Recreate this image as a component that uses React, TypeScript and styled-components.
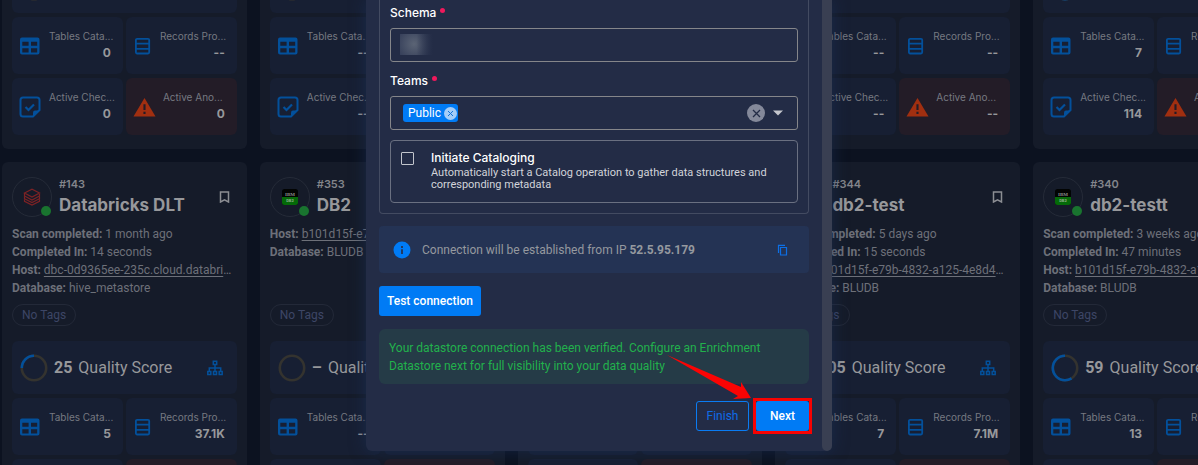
import React from "react";
import styled, { createGlobalStyle, css } from "styled-components";

const Global = createGlobalStyle`
  * { box-sizing: border-box; }
  body { margin: 0; background: #0c1220; font-family: Roboto, "Liberation Sans", sans-serif; color: #fff; }
  p, h2 { margin: 0; }
  button { font-family: inherit; padding: 0; cursor: pointer; }
`;

const Shell = styled.div`
  position: relative;
  height: 100vh;
  overflow: hidden;
`;

/* Datastore list, scrolled so that the first row is partly out of view */
const CardGrid = styled.main`
  display: grid;
  grid-template-columns: repeat(5, minmax(0, 1fr));
  gap: 13px;
  margin: -54px -80px 0 2px;
`;

const Card = styled.article`
  background: #151b29;
  border-radius: 6px;
  padding: 14px 10px;
`;

const CardHead = styled.header`
  display: flex;
  align-items: center;
  height: 42px;
`;

const Avatar = styled.div`
  position: relative;
  display: grid;
  place-items: center;
  flex: none;
  width: 40px;
  height: 40px;
  border: 1px solid #252b38;
  border-radius: 50%;
`;

const StatusDot = styled.span`
  position: absolute;
  right: 0;
  bottom: 0;
  width: 10px;
  height: 10px;
  border-radius: 50%;
  background: #19742f;
`;

const HeadText = styled.div`
  flex: 1;
  margin-left: 7px;
  font-family: Inter, "Liberation Sans", sans-serif;
  white-space: nowrap;
`;

const CardId = styled.p`
  font-size: 11px;
  line-height: 16px;
  font-weight: 600;
  color: #83858b;
`;

const CardTitle = styled.h2`
  font-size: 17px;
  line-height: 26px;
  font-weight: 700;
  color: #97989b;
`;

const Bookmark = styled.button`
  display: grid;
  background: none;
  border: 0;
  margin-right: 7px;
  color: #8c8e93;
`;

const Facts = styled.div`
  height: 73px;
  margin-top: 7px;
`;

const Fact = styled.p`
  font-size: 12px;
  line-height: 18px;
  color: #6d7079;
  white-space: nowrap;
  overflow: hidden;
  text-overflow: ellipsis;
  b { font-weight: 700; }
  a { color: inherit; text-underline-offset: 2px; }
`;

const Tag = styled.span`
  display: inline-flex;
  align-items: center;
  height: 22px;
  padding: 0 9px;
  margin: 6px 0 15px;
  border: 1px solid #232938;
  border-radius: 11px;
  font-size: 12px;
  color: #3d4666;
`;

const Tiles = styled.div`
  display: grid;
  grid-template-columns: repeat(2, minmax(0, 1fr));
  gap: 4px 3px;
`;

const Score = styled.section`
  grid-column: span 2;
  display: flex;
  align-items: center;
  height: 53px;
  padding: 0 14px 0 8px;
  border-radius: 6px;
  background: #171f33;
  font-size: 16px;
  white-space: nowrap;
  color: #97989b;
  b { margin: 0 6px; }
  svg:last-child { margin-left: auto; }
`;

const Tile = styled.section<{ $alert?: boolean }>`
  display: flex;
  align-items: center;
  height: 57px;
  padding: 0 12px 0 7px;
  border-radius: 6px;
  background: ${(p) => (p.$alert ? "#231c27" : "#171f33")};
  svg { flex: none; }
`;

const TileText = styled.div`
  flex: 1;
  min-width: 0;
  margin-left: 7px;
  padding-bottom: 3px;
  font-family: Inter, "Liberation Sans", sans-serif;
`;

const TileLabel = styled.p`
  font-size: 10px;
  line-height: 16px;
  color: #767981;
  white-space: nowrap;
`;

const TileValue = styled.p`
  font-size: 12px;
  line-height: 17px;
  font-weight: 700;
  text-align: right;
  color: #97989b;
`;

/* Dialog layer */
const Overlay = styled.div`
  position: absolute;
  inset: 0;
  display: flex;
  justify-content: center;
  align-items: flex-start;
`;

const Dialog = styled.section`
  display: flex;
  width: 466px;
  max-width: 100%;
  background: #232c46;
  border-radius: 0 0 6px 6px;
  box-shadow: 0 0 16px rgba(26, 50, 92, 0.6);
`;

const ScrollThumb = styled.div`
  width: 10px;
  background: #393f52;
  border-radius: 0 0 5px 5px;
`;

const DialogBody = styled.form`
  flex: 1;
  padding: 0 13px 20px;
`;

const Group = styled.div`
  padding: 4px 10px 10px;
  border: 1px solid #434b61;
  border-top: 0;
  border-radius: 0 0 4px 4px;
`;

const Field = styled.div`
  margin-bottom: 10px;
`;

const Label = styled.label`
  display: flex;
  font-family: Inter, "Liberation Sans", sans-serif;
  font-size: 12px;
  line-height: 18px;
  font-weight: 500;
  margin-bottom: 6px;
  &::after {
    content: "";
    width: 5px;
    height: 5px;
    margin: 4px 0 0 4px;
    border-radius: 50%;
    background: #f0195c;
  }
`;

const box = css`
  width: 100%;
  height: 34px;
  border: 1px solid #85868a;
  border-radius: 3px;
  background: transparent;
`;

const InputWrap = styled.div`
  position: relative;
`;

const TextInput = styled.input`
  ${box}
  display: block;
  padding: 0 12px;
  color: #fff;
  outline: 0;
`;

const Redacted = styled.span`
  position: absolute;
  left: 10px;
  top: 6px;
  width: 33px;
  height: 21px;
  background: linear-gradient(90deg, transparent 50%, #232c46), radial-gradient(circle at 14px 10px, #5b6475, #2c3653 22px);
`;

const Combo = styled.div`
  ${box}
  display: flex;
  align-items: center;
  padding: 0 6px 0 12px;
`;

const Chip = styled.span`
  display: flex;
  align-items: center;
  gap: 3px;
  height: 18px;
  padding: 0 1px 0 5px;
  border-radius: 3px;
  background: #007bf5;
  font-size: 12px;
`;

const RoundButton = styled.button<{ $size: number; $bg: string; $fg: string }>`
  display: grid;
  place-items: center;
  width: ${(p) => p.$size}px;
  height: ${(p) => p.$size}px;
  border: 0;
  border-radius: 50%;
  background: ${(p) => p.$bg};
  color: ${(p) => p.$fg};
`;

const ComboInput = styled.input`
  flex: 1;
  min-width: 0;
  border: 0;
  outline: 0;
  background: none;
  color: #fff;
`;

const PlainButton = styled.button`
  display: grid;
  border: 0;
  background: none;
`;

const Option = styled.div`
  display: flex;
  padding: 8px 10px 9px;
  border: 1px solid #6a7081;
  border-radius: 4px;
`;

const Check = styled.input`
  appearance: none;
  flex: none;
  width: 13px;
  height: 13px;
  margin: 3px 17px 0 0;
  border: 1px solid #c2c5cc;
  border-radius: 1px;
`;

const OptionLabel = styled.label`
  display: block;
  font-family: Inter, "Liberation Sans", sans-serif;
  font-size: 12px;
  line-height: 18px;
  font-weight: 500;
`;

const OptionHint = styled.p`
  font-size: 11px;
  line-height: 12px;
  padding-bottom: 2px;
  color: #d2d4da;
`;

const Info = styled.div`
  display: flex;
  align-items: center;
  height: 47px;
  margin: 12px 0 13px;
  padding: 0 20px 0 14px;
  border-radius: 4px;
  background: #243354;
  font-size: 12px;
  color: #95999f;
  p { flex: 1; margin-left: 11px; }
`;

const Action = styled.button<{ $outline?: boolean }>`
  height: 30px;
  padding: 0 ${(p) => (p.$outline ? 9 : 8)}px;
  border: ${(p) => (p.$outline ? "1px solid #0a7cf4" : "0")};
  border-radius: 3px;
  background: ${(p) => (p.$outline ? "transparent" : "#007bf5")};
  color: ${(p) => (p.$outline ? "#0f6be8" : "#fff")};
  font-size: 12px;
  font-weight: ${(p) => (p.$outline ? 400 : 500)};
`;

const Success = styled.p`
  margin: 13px 0 17px;
  padding: 10px 10px 9px;
  border-radius: 6px;
  background: #253b47;
  font-size: 12px;
  line-height: 18px;
  color: #22b14c;
`;

const Footer = styled.footer`
  position: relative;
  display: flex;
  justify-content: flex-end;
  gap: 7px;
  ${Action} { width: 53px; }
`;

const Highlight = styled.span`
  display: flex;
  outline: 3px solid #f80202;
`;

const Arrow = styled.svg`
  position: absolute;
  right: 55px;
  top: -50px;
`;

const TableIcon = () => (
  <svg width="23" height="18" viewBox="0 0 23 18" fill="#03509b" fillRule="evenodd" aria-hidden="true">
    <path d="M3 .5h15.500a2 2 0 0 1 2 2V15.500a2 2 0 0 1-2 2H3a2 2 0 0 1-2-2V2.500a2 2 0 0 1 2-2ZM3.300 4.800v4h6.300v-4ZM12 4.800v4h6.200v-4ZM3.300 11.200v4.200h6.300v-4.200ZM12 11.200v4.200h6.200v-4.200Z" />
  </svg>
);
const RowsIcon = () => (
  <svg width="20" height="20" viewBox="0 0 20 20" fill="none" stroke="#03509b" strokeWidth="1.800" aria-hidden="true">
    <rect x="2.900" y="2.900" width="13.300" height="14.600" rx="1.200" />
    <path d="M3 7.600h13M3 12.800h13" />
  </svg>
);
const CheckIcon = () => (
  <svg width="23" height="22" viewBox="0 0 23 22" fill="none" stroke="#03509b" strokeWidth="2" aria-hidden="true">
    <path d="M20.500 14V4Q20.500 1.500 18 1.500H4Q1.500 1.500 1.500 4V18Q1.500 20.500 4 20.500H14Z" />
    <path d="M14 21V16.500Q14 14.500 16 14.500H21Z" fill="#03509b" stroke="none" />
    <path d="M6.500 11l3 3 5.500-5.500" strokeWidth="2.200" />
  </svg>
);
const AlertIcon = () => (
  <svg width="23" height="22" viewBox="0 0 24 22" aria-hidden="true">
    <path d="M12 1.500 23.500 21H.5Z" fill="#a12f10" />
    <path d="M12 8v6M12 16v2.400" stroke="#231c27" strokeWidth="2.200" />
  </svg>
);
const TreeIcon = () => (
  <svg width="16" height="16" viewBox="0 0 16 16" fill="none" stroke="#03509b" strokeWidth="1.500" aria-hidden="true">
    <path d="M6.300 1.200h3.400v3.200H6.300zM.8 11.400h3v3h-3zM6.500 11.400h3v3h-3zM12.200 11.400h3v3h-3zM8 4.500v7M2.300 11.400V8h11.400v3.400" />
  </svg>
);
const Ring = ({ value }: { value: number }) => (
  <svg width="28" height="28" viewBox="0 0 28 28" fill="none" strokeWidth="2.600" aria-hidden="true">
    <circle cx="14" cy="14" r="12.200" stroke="#34332f" />
    {value > 0 && (
      <circle cx="14" cy="14" r="12.200" stroke="#03509b" pathLength="100" strokeDasharray={`${value} 100`} transform="matrix(0 -1 -1 0 28 28)" />
    )}
  </svg>
);
const DatabricksLogo = () => (
  <svg width="18" height="18" viewBox="0 0 18 18" fill="none" stroke="#7c2225" strokeWidth="1.200" aria-hidden="true">
    <path d="M1.500 5 9 1.200 16.500 5 9 9ZM1.500 5v3L9 12l7.500-4V6M1.500 8.500v2.200L9 14.500l7.500-3.800V8.500M1.500 11.500v1.800L9 17l7.500-3.700v-1.800" />
  </svg>
);
const Db2Logo = () => (
  <svg width="16" height="16" viewBox="0 0 16 16" aria-hidden="true">
    <rect width="16" height="16" rx="2.500" fill="#020403" />
    <path d="M0 8h16v5.500a2.500 2.500 0 0 1-2.500 2.500h-11A2.500 2.500 0 0 1 0 13.500Z" fill="#046a08" />
    <text x="8" y="6.500" textAnchor="middle" fontSize="5" fontWeight="700" fontFamily="Liberation Serif, serif" fill="#8b8b8b">IBM</text>
    <text x="8" y="13" textAnchor="middle" fontSize="4" fontWeight="700" fill="#8fae90">DB2</text>
  </svg>
);

type Metrics = { score: string; tables: string; records: string; checks: string; anomalies: string };
type Store = Metrics & { id: string; name: string; kind: "dlt" | "db2"; scan?: string; took?: string; host: string; db: string };

const topRow: Metrics[] = [
  { score: "–", tables: "0", records: "--", checks: "0", anomalies: "0" },
  { score: "–", tables: "--", records: "--", checks: "--", anomalies: "--" },
  { score: "–", tables: "--", records: "--", checks: "--", anomalies: "--" },
  { score: "–", tables: "--", records: "--", checks: "--", anomalies: "--" },
  { score: "55", tables: "7", records: "--", checks: "114", anomalies: "--" },
];

const ibmHost = "b101d15f-e79b-4832-a125-4e8d481c8bf4";
const stores: Store[] = [
  { id: "#143", name: "Databricks DLT", kind: "dlt", scan: "1 month ago", took: "14 seconds", host: "dbc-0d9365ee-235c.cloud.databricks.com", db: "hive_metastore", score: "25", tables: "5", records: "37.1K", checks: "--", anomalies: "--" },
  { id: "#353", name: "DB2", kind: "db2", host: ibmHost, db: "BLUDB", score: "–", tables: "--", records: "--", checks: "--", anomalies: "--" },
  { id: "#352", name: "DB2", kind: "db2", host: ibmHost, db: "BLUDB", score: "–", tables: "--", records: "--", checks: "--", anomalies: "--" },
  { id: "#344", name: "db2-test", kind: "db2", scan: "5 days ago", took: "15 seconds", host: ibmHost, db: "BLUDB", score: "05", tables: "7", records: "7.1M", checks: "--", anomalies: "--" },
  { id: "#340", name: "db2-testt", kind: "db2", scan: "3 weeks ago", took: "47 minutes", host: ibmHost, db: "BLUDB", score: "59", tables: "13", records: "--", checks: "--", anomalies: "--" },
];

const MetricTile = ({ icon, label, value, alert }: { icon: React.ReactNode; label: string; value: string; alert?: boolean }) => (
  <Tile $alert={alert}>
    {icon}
    <TileText>
      <TileLabel>{label}</TileLabel>
      <TileValue>{value}</TileValue>
    </TileText>
  </Tile>
);

const MetricTiles = ({ m }: { m: Metrics }) => (
  <Tiles>
    <Score>
      <Ring value={Number(m.score) || 0} />
      <b>{m.score}</b>
      <span>Quality Score</span>
      <TreeIcon />
    </Score>
    <MetricTile icon={<TableIcon />} label="Tables Cata..." value={m.tables} />
    <MetricTile icon={<RowsIcon />} label="Records Pro..." value={m.records} />
    <MetricTile icon={<CheckIcon />} label="Active Chec..." value={m.checks} />
    <MetricTile icon={<AlertIcon />} label="Active Ano..." value={m.anomalies} alert />
  </Tiles>
);

const StoreCard = ({ s }: { s: Store }) => (
  <Card>
    <CardHead>
      <Avatar>
        {s.kind === "dlt" ? <DatabricksLogo /> : <Db2Logo />}
        <StatusDot />
      </Avatar>
      <HeadText>
        <CardId>{s.id}</CardId>
        <CardTitle>{s.name}</CardTitle>
      </HeadText>
      <Bookmark type="button" aria-label="Bookmark">
        <svg width="11" height="12" viewBox="0 0 11 12" fill="none" stroke="currentColor" strokeWidth="1.500">
          <path d="M1.500 1h8v10l-4-2.200-4 2.200Z" />
        </svg>
      </Bookmark>
    </CardHead>
    <Facts>
      {s.scan && <Fact><b>Scan completed:</b> {s.scan}</Fact>}
      {s.took && <Fact><b>Completed In:</b> {s.took}</Fact>}
      <Fact><b>Host:</b> <a href="#host">{s.host}</a></Fact>
      <Fact><b>Database:</b> {s.db}</Fact>
    </Facts>
    <Tag>No Tags</Tag>
    <MetricTiles m={s} />
  </Card>
);

export default function App() {
  return (
    <Shell>
      <Global />
      <CardGrid>
        {topRow.map((m, i) => (
          <Card key={i}><MetricTiles m={m} /></Card>
        ))}
        {stores.map((s) => <StoreCard key={s.id} s={s} />)}
      </CardGrid>
      <Overlay>
        <Dialog role="dialog" aria-label="Add datastore">
          <DialogBody onSubmit={(e) => e.preventDefault()}>
            <Group>
              <Field>
                <Label htmlFor="schema">Schema</Label>
                <InputWrap>
                  <TextInput id="schema" />
                  <Redacted />
                </InputWrap>
              </Field>
              <Field>
                <Label htmlFor="teams">Teams</Label>
                <Combo>
                  <Chip>
                    Public
                    <RoundButton type="button" aria-label="Remove Public" $size={13} $bg="#a5cdf8" $fg="#1273d8">
                      <svg width="7" height="7" viewBox="0 0 7 7" stroke="currentColor"><path d="M1 1l5 5M6 1 1 6" /></svg>
                    </RoundButton>
                  </Chip>
                  <ComboInput id="teams" role="combobox" aria-expanded="false" />
                  <RoundButton type="button" aria-label="Clear teams" $size={18} $bg="#84899a" $fg="#232c46">
                    <svg width="9" height="9" viewBox="0 0 9 9" stroke="currentColor" strokeWidth="1.300"><path d="M1 1l7 7M8 1 1 8" /></svg>
                  </RoundButton>
                  <PlainButton type="button" aria-label="Open teams">
                    <svg width="26" height="6" viewBox="0 0 26 6"><path d="M8 .5h10l-5 5Z" fill="#c4c6cc" /></svg>
                  </PlainButton>
                </Combo>
              </Field>
              <Option>
                <Check type="checkbox" id="catalog" />
                <div>
                  <OptionLabel htmlFor="catalog">Initiate Cataloging</OptionLabel>
                  <OptionHint>Automatically start a Catalog operation to gather data structures and corresponding metadata</OptionHint>
                </div>
              </Option>
            </Group>
            <Info>
              <svg width="18" height="18" viewBox="0 0 18 18" aria-hidden="true">
                <circle cx="9" cy="9" r="8.500" fill="#007bf5" />
                <path d="M9 5v2M9 8.200V13" stroke="#243354" strokeWidth="1.800" />
              </svg>
              <p>Connection will be established from IP <b>52.5.95.179</b></p>
              <PlainButton type="button" aria-label="Copy IP address">
                <svg width="12" height="12" viewBox="0 0 12 12" fill="none" stroke="#0c6fe6" strokeWidth="1.200">
                  <path d="M3.500 3.500h6v7.500h-6zM1.500 9V1.300H8" />
                </svg>
              </PlainButton>
            </Info>
            <Action type="button">Test connection</Action>
            <Success>Your datastore connection has been verified. Configure an Enrichment Datastore next for full visibility into your data quality</Success>
            <Footer>
              <Action type="button" $outline>Finish</Action>
              <Highlight><Action type="submit">Next</Action></Highlight>
              <Arrow width="90" height="50" viewBox="0 0 90 50" aria-hidden="true">
                <path d="M3 4 77 36 77 31 87 47 69 48 74 45Z" fill="#fb0404" />
              </Arrow>
            </Footer>
          </DialogBody>
          <ScrollThumb />
        </Dialog>
      </Overlay>
    </Shell>
  );
}
